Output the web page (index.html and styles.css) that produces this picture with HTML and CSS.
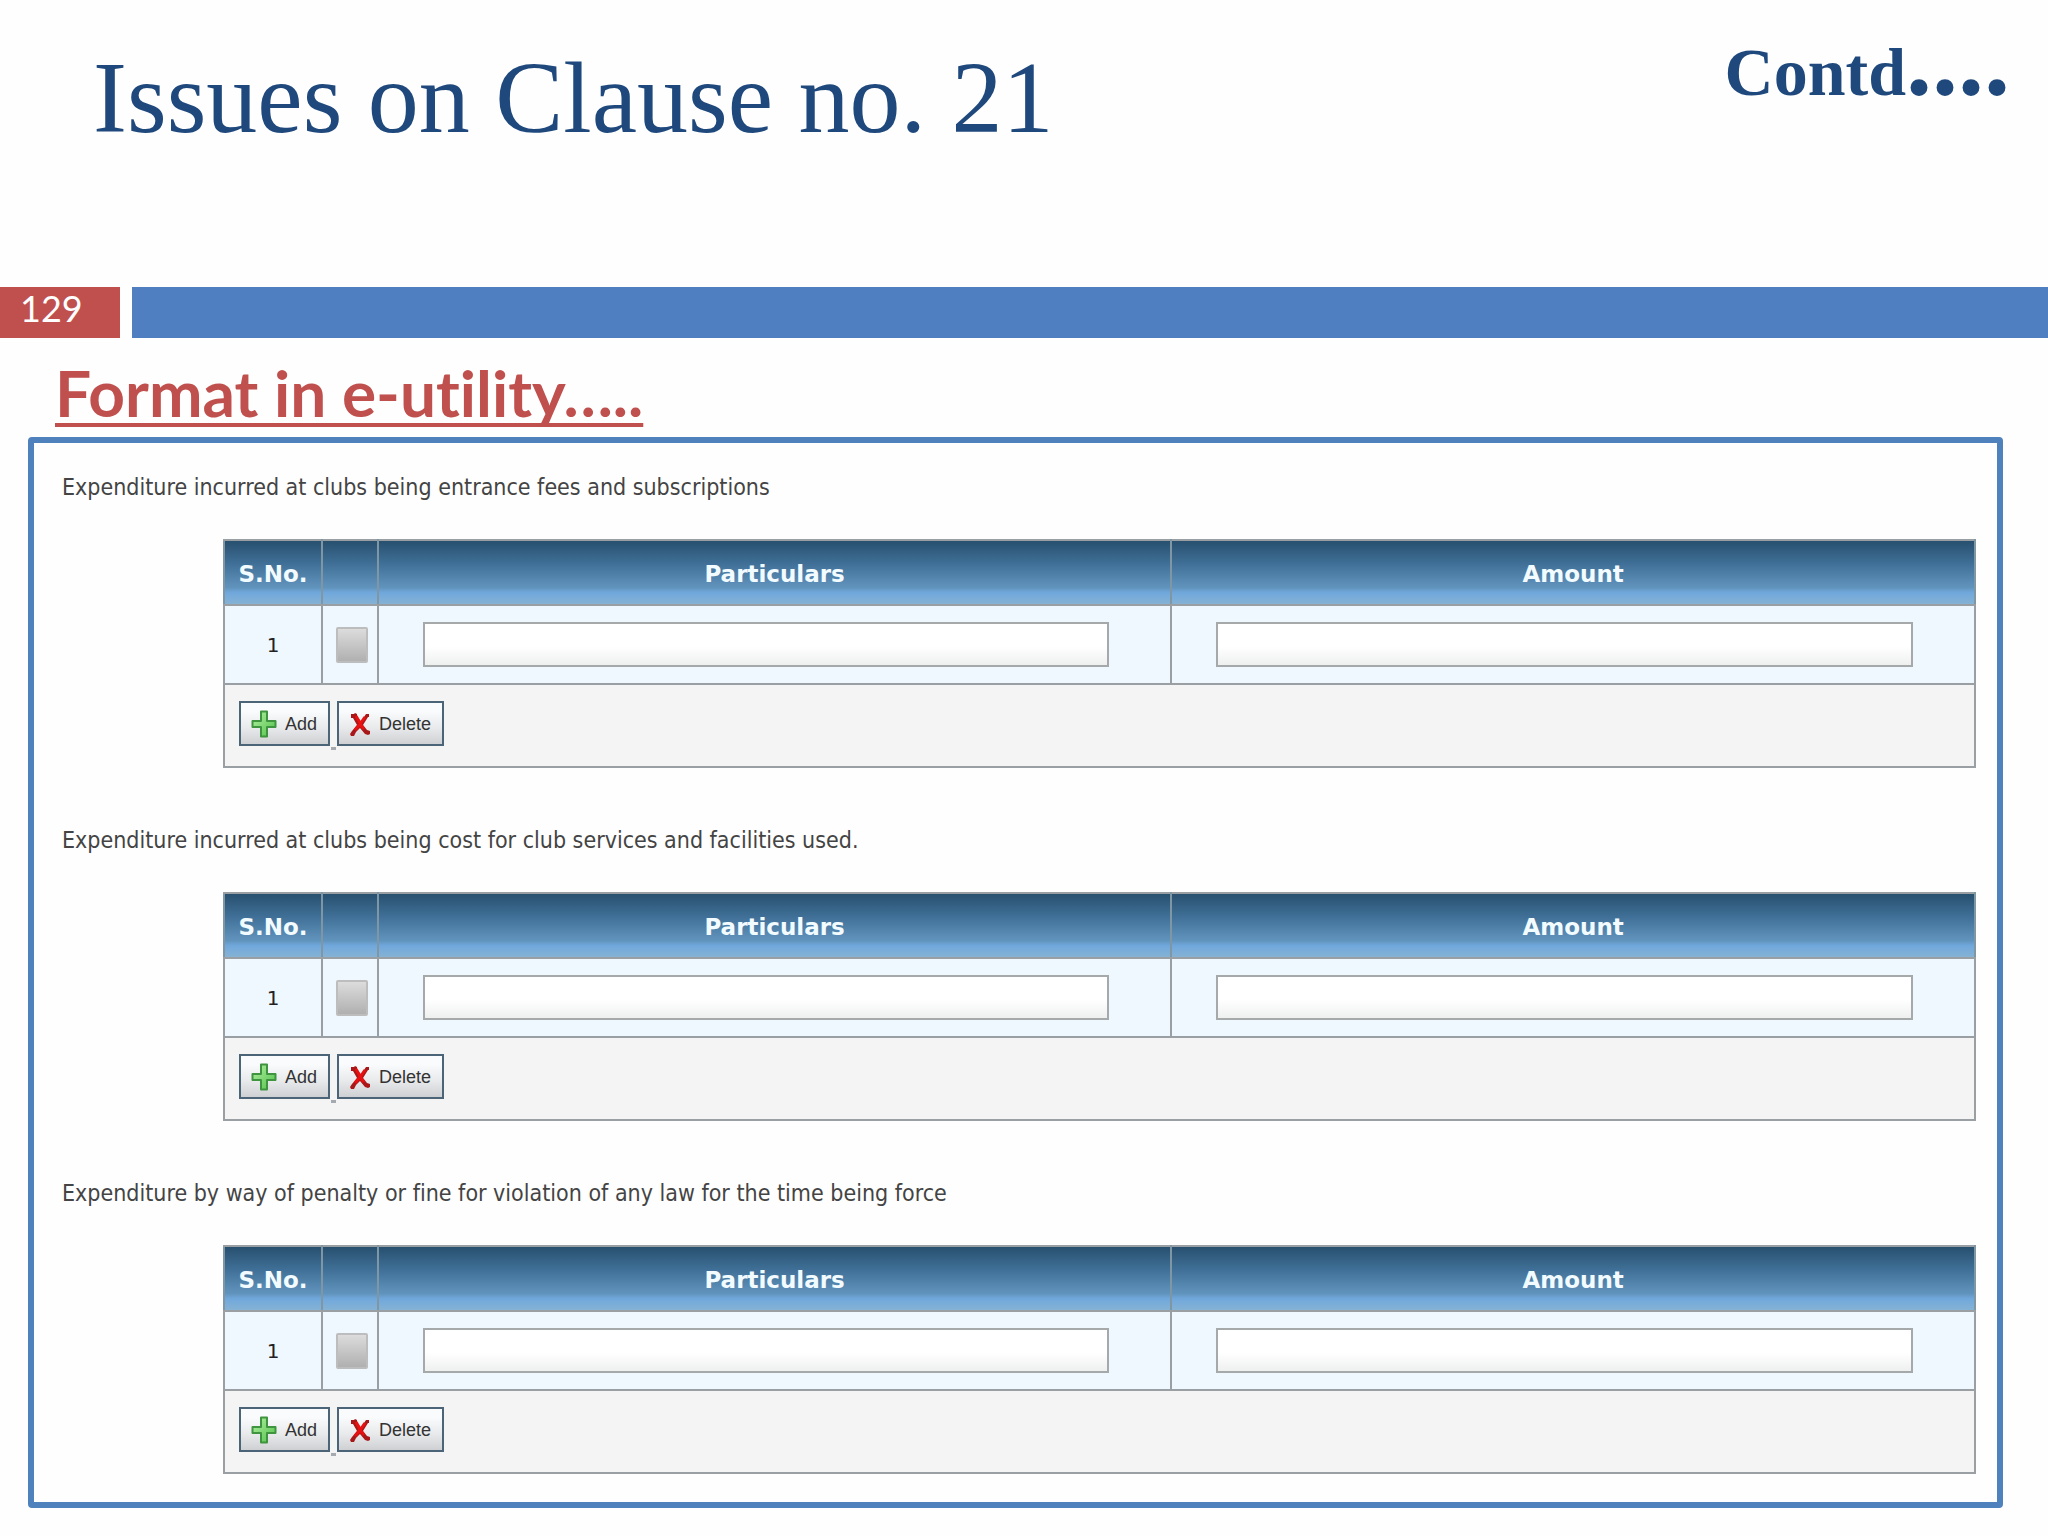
FILE: index.html
```html
<!DOCTYPE html>
<html lang="en">
<head>
<meta charset="utf-8">
<title>Issues on Clause no. 21</title>
<link rel="stylesheet" href="styles.css">
</head>
<body>
<svg class="sprite" aria-hidden="true">
  <defs>
    <linearGradient id="green" x1="0" y1="0" x2="1" y2="1">
      <stop offset="0" stop-color="#b4f0a4"/>
      <stop offset="1" stop-color="#4fc048"/>
    </linearGradient>
  </defs>
  <symbol id="plus" viewBox="0 0 26 28">
    <path d="M10 1.500h6v9.500h8.500v6H16v9.500h-6V17H1.500v-6H10z" fill="url(#green)" stroke="#3f9440" stroke-width="2" stroke-linejoin="round"/>
  </symbol>
  <symbol id="cross" viewBox="0 0 22 24">
    <path d="M2 2h3l1-1 2 1v2l4 6 3-5 2-3h3v3h-1l-5 8 4 5 3 1v3l-2 1-3-1-5-6-4 4-2 4H2l-1-2 2-3 5-6-4-7H2z" fill="#a81818"/>
    <path d="M7 4l4 7M16 5l-5 7-5 6M11 12l4 5" fill="none" stroke="#e81010" stroke-width="3"/>
  </symbol>
</svg>
<header class="masthead">
  <h1 class="title">Issues on Clause no. 21</h1>
  <p class="contd">Contd<span class="dots">....</span></p>
</header>
<div class="band">
  <span class="page-number">129</span>
  <span class="band-fill"></span>
</div>
<main>
  <h2 class="subtitle">Format in e-utility…..</h2>
  <form class="panel">
    <section class="entry">
      <h3 class="label">Expenditure incurred at clubs being entrance fees and subscriptions</h3>
      <table class="grid">
        <colgroup><col class="col-no"><col class="col-check"><col class="col-particulars"><col></colgroup>
        <thead><tr><th>S.No.</th><th></th><th>Particulars</th><th>Amount</th></tr></thead>
        <tbody><tr>
          <td class="number">1</td>
          <td class="pick"><input class="check" type="checkbox" aria-label="Select row 1"></td>
          <td class="field"><input class="text" type="text" aria-label="Particulars"></td>
          <td class="field"><input class="text" type="text" aria-label="Amount"></td>
        </tr></tbody>
        <tfoot><tr><td colspan="4"><div class="actions">
          <button class="button" type="button"><svg class="plus"><use href="#plus"/></svg>Add</button>
          <span class="mark"></span>
          <button class="button" type="button"><svg class="cross"><use href="#cross"/></svg>Delete</button>
        </div></td></tr></tfoot>
      </table>
    </section>
    <section class="entry">
      <h3 class="label">Expenditure incurred at clubs being cost for club services and facilities used.</h3>
      <table class="grid">
        <colgroup><col class="col-no"><col class="col-check"><col class="col-particulars"><col></colgroup>
        <thead><tr><th>S.No.</th><th></th><th>Particulars</th><th>Amount</th></tr></thead>
        <tbody><tr>
          <td class="number">1</td>
          <td class="pick"><input class="check" type="checkbox" aria-label="Select row 1"></td>
          <td class="field"><input class="text" type="text" aria-label="Particulars"></td>
          <td class="field"><input class="text" type="text" aria-label="Amount"></td>
        </tr></tbody>
        <tfoot><tr><td colspan="4"><div class="actions">
          <button class="button" type="button"><svg class="plus"><use href="#plus"/></svg>Add</button>
          <span class="mark"></span>
          <button class="button" type="button"><svg class="cross"><use href="#cross"/></svg>Delete</button>
        </div></td></tr></tfoot>
      </table>
    </section>
    <section class="entry">
      <h3 class="label">Expenditure by way of penalty or fine for violation of any law for the time being force</h3>
      <table class="grid">
        <colgroup><col class="col-no"><col class="col-check"><col class="col-particulars"><col></colgroup>
        <thead><tr><th>S.No.</th><th></th><th>Particulars</th><th>Amount</th></tr></thead>
        <tbody><tr>
          <td class="number">1</td>
          <td class="pick"><input class="check" type="checkbox" aria-label="Select row 1"></td>
          <td class="field"><input class="text" type="text" aria-label="Particulars"></td>
          <td class="field"><input class="text" type="text" aria-label="Amount"></td>
        </tr></tbody>
        <tfoot><tr><td colspan="4"><div class="actions">
          <button class="button" type="button"><svg class="plus"><use href="#plus"/></svg>Add</button>
          <span class="mark"></span>
          <button class="button" type="button"><svg class="cross"><use href="#cross"/></svg>Delete</button>
        </div></td></tr></tfoot>
      </table>
    </section>
  </form>
</main>
</body>
</html>
```
FILE: styles.css
```css
* { box-sizing: border-box; }
body { margin: 0; background: #fefefe; }
h1, h2, h3, p { margin: 0; }
.sprite { display: block; width: 0; height: 0; }

.masthead {
  display: flex;
  justify-content: space-between;
  align-items: flex-start;
  min-height: 287px;
  padding: 0 38px 0 93px;
  color: #1f497d;
  font-family: "Liberation Serif", serif;
}
.title { padding-top: 40px; font-size: 102px; line-height: 116px; font-weight: 400; }
.contd { padding-top: 2px; font-size: 68px; line-height: 116px; font-weight: 700; }
.dots { font-size: 104px; }

.band { display: flex; gap: 12px; height: 51px; }
.page-number {
  width: 120px;
  padding-left: 20px;
  background: #c0504d;
  color: #fff;
  font: 36px/42px Lato, sans-serif;
}
.band-fill { flex: 1; background: #4f7fc0; }

.subtitle {
  padding: 17px 55px 6px;
  color: #c0504d;
  font: 700 64px/76px Lato, sans-serif;
  font-variant-ligatures: none;
  text-decoration: underline;
  text-decoration-thickness: 4px;
  text-underline-offset: 6px;
  text-decoration-skip-ink: none;
}

.panel {
  display: flex;
  flex-direction: column;
  gap: 56px;
  margin: 0 45px 28px 28px;
  padding: 28px 21px 28px 28px;
  border: 6px solid #4f81bd;
  border-radius: 4px;
}
.entry { display: flex; flex-direction: column; gap: 36px; }
.label {
  color: #444;
  font: 23px/32px "DejaVu Sans Condensed", "DejaVu Sans", sans-serif;
  font-variant-ligatures: none;
}

.grid {
  width: calc(100% - 161px);
  margin-left: 161px;
  table-layout: fixed;
  border-collapse: collapse;
  border: 2px solid #999fa3;
}
.grid th, .grid td { padding: 0; border: 2px solid #999fa3; }
.col-no { width: 98px; }
.col-check { width: 56px; }
.col-particulars { width: 45.3%; }
.grid th {
  height: 65px;
  padding-top: 2px;
  background: linear-gradient(#28506f, #3f6f96 35%, #6194bd 74%, #70a8dc 82%, #85b2d4);
  color: #f2fbff;
  font: 700 23px/28px "DejaVu Sans", sans-serif;
}
.grid thead th { border-left-color: #7f97a5; border-right-color: #7f97a5; }
.grid tbody td { height: 79px; background: #f0f8ff; text-align: center; }
.grid .number { font: 20px/24px "DejaVu Sans", sans-serif; color: #222; }
.grid .pick { padding-left: 4px; }
.grid .field { padding: 0 61px 0 44px; }
.grid tfoot td { height: 83px; background: #f4f4f5; }

.text {
  display: block;
  width: 100%;
  height: 45px;
  padding: 0 8px;
  border: 2px solid #a6a9aa;
  background: linear-gradient(#fff 55%, #eef0ef);
  font: 20px/24px "DejaVu Sans", sans-serif;
}
.check {
  appearance: none;
  display: block;
  width: 32px;
  height: 36px;
  margin: 0 auto;
  border: 2px solid #bdbdbd;
  border-radius: 2px;
  background: linear-gradient(#dcdcdc, #b0b0b0);
}
.actions { display: flex; padding: 0 14px 4px; }
.button {
  display: flex;
  align-items: center;
  gap: 8px;
  height: 45px;
  padding: 0 11px 0 10px;
  border: 2px solid #4b6478;
  background: linear-gradient(#fafbfc 20%, #e9eaec 60%, #cfd0d3);
  color: #333;
  font: 18px/24px "Liberation Sans", sans-serif;
}
.plus { width: 26px; height: 28px; }
.cross { width: 22px; height: 24px; }
.mark { align-self: flex-end; width: 5px; height: 3px; margin: 0 1px -4px; background: #a5a9b0; }
```
